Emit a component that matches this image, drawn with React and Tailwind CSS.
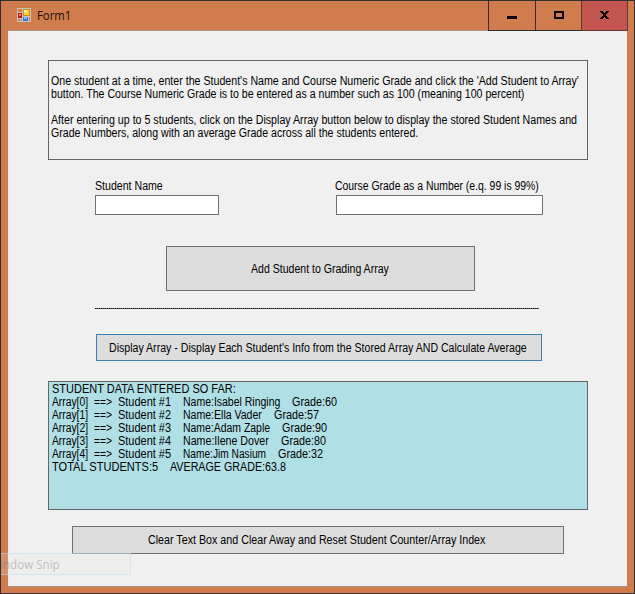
import { useLayoutEffect, useRef, useState } from "react";

// A single run of text, condensed horizontally to a set width.
function Run({ w, gap = 0, children }) {
  const ref = useRef(null);
  const [scale, setScale] = useState(1);
  useLayoutEffect(() => {
    setScale(w / ref.current.offsetWidth);
  }, [w, children]);
  return (
    <span className="block shrink-0 whitespace-pre" style={{ width: w, marginLeft: gap }}>
      <span ref={ref} className="inline-block origin-left align-top" style={{ transform: `scaleX(${scale})` }}>
        {children}
      </span>
    </span>
  );
}

const students = [
  { name: "Isabel Ringing", grade: 60, nameW: 97 },
  { name: "Ella Vader", grade: 57, nameW: 79 },
  { name: "Adam Zaple", grade: 90, nameW: 87 },
  { name: "Ilene Dover", grade: 80, nameW: 86 },
  { name: "Jim Nasium", grade: 32, nameW: 83 },
];

function FormIcon() {
  return (
    <svg className="ml-4 mt-[7px] shrink-0" width="14" height="14" viewBox="0 0 14 14" shapeRendering="crispEdges">
      <path d="M0 0H14V14H0Z" fill="#c9c3bd" />
      <path d="M1 1H5V4H1Z M1 11H3V13H1Z M4 11H5V13H4Z M12 9H13V13H12Z" fill="#d07c4d" />
      <rect x="1" y="5" width="4" height="5" fill="#b51b1b" />
      <rect x="2" y="6" width="2" height="2" fill="#ee7777" />
      <rect x="6" y="1" width="7" height="7" fill="#c9940f" />
      <rect x="7" y="2" width="5" height="5" fill="#f8cc3c" />
      <rect x="7" y="2" width="3" height="2" fill="#fff0a0" />
      <rect x="6" y="9" width="5" height="4" fill="#3478dc" />
      <rect x="7" y="9" width="3" height="2" fill="#80b4f5" />
    </svg>
  );
}

export default function App() {
  return (
    <div className="relative flex h-[594px] w-[635px] flex-col overflow-hidden border border-[#303035] bg-[#d07c4d] font-['Liberation_Sans',Arial,sans-serif] text-[12px] leading-[13px] text-black">
      <header className="flex h-[30px] shrink-0">
        <FormIcon />
        <div className="ml-[6px] mt-[6px] font-['Open_Sans',sans-serif] text-[12px] leading-[18px] text-[#200c08]">
          <Run w={34}>Form1</Run>
        </div>
        <div className="ml-auto mr-[6px] flex h-[30px]">
          <button className="flex w-[47px] items-start justify-center border-b border-l border-[#303035] pt-[15px]" aria-label="Minimize">
            <svg width="10" height="3" shapeRendering="crispEdges"><path d="M0 0H10V3H0Z" /></svg>
          </button>
          <button className="flex w-[46px] items-start justify-center border-b border-l border-[#303035] pt-[10px]" aria-label="Maximize">
            <svg width="10" height="8" shapeRendering="crispEdges"><path fillRule="evenodd" d="M0 0H10V8H0ZM2 2V6H8V2Z" /></svg>
          </button>
          <button className="flex w-[47px] items-start justify-center border-x border-b border-[#643535] bg-[#c2564f] pt-[10px]" aria-label="Close">
            <svg width="9" height="8" shapeRendering="crispEdges">
              <path d="M0 0H3V1H4V2H5V1H6V0H9V1H8V2H7V3H6V5H7V6H8V7H9V8H6V7H5V6H4V7H3V8H0V7H1V6H2V5H3V3H2V2H1V1H0Z" />
            </svg>
          </button>
        </div>
      </header>
      <main className="ml-[7px] -mt-px flex h-[557px] w-[619px] shrink-0 flex-col border-y border-[#a8918c] bg-[#f0f0f0] [clip-path:polygon(0_0,480px_0,480px_1px,620px_1px,620px_100%,0_100%)]">
        <section className="ml-10 mt-[29px] h-[100px] w-[540px] shrink-0 border border-[#646464] pl-[2px] pt-[14px]">
          <Run w={528}>One student at a time, enter the Student's Name and Course Numeric Grade and click the 'Add Student to Array'</Run>
          <Run w={473}>button. The Course Numeric Grade is to be entered as a number such as 100 (meaning 100 percent)</Run>
          <div className="h-[13px]" />
          <Run w={526}>After entering up to 5 students, click on the Display Array button below to display the stored Student Names and</Run>
          <Run w={367}>Grade Numbers, along with an average Grade across all the students entered.</Run>
        </section>
        <div className="ml-[87px] mt-5 flex shrink-0">
          <label className="w-[240px]">
            <Run w={68}>Student Name</Run>
            <input className="mt-[2px] block h-5 w-[124px] border border-[#707070] bg-white" />
          </label>
          <label>
            <Run w={204}>Course Grade as a Number (e.q. 99 is 99%)</Run>
            <input className="ml-px mt-[2px] block h-5 w-[207px] border border-[#707070] bg-white" />
          </label>
        </div>
        <button className="ml-[158px] mt-[31px] flex h-[45px] w-[309px] shrink-0 items-center border border-[#707070] bg-[#dddddd] pl-[84px] pt-[2px]">
          <Run w={138}>Add Student to Grading Array</Run>
        </button>
        <div className="ml-[87px] mt-[17px] h-px w-[444px] shrink-0 bg-[repeating-linear-gradient(90deg,#101018_0_1px,#2f5f8c_1px_2px,#101018_2px_3px,#7d5632_3px_4px)]" />
        <button className="ml-[88px] mt-[25px] flex h-[27px] w-[446px] shrink-0 items-center border border-[#3c7fb1] bg-[#dddddd] pl-3 pt-[2px]">
          <Run w={418}>Display Array - Display Each Student's Info from the Stored Array AND Calculate Average</Run>
        </button>
        <section className="ml-10 mt-5 h-[129px] w-[540px] shrink-0 border border-[#646464] bg-[#b0e0e6] pl-[3px] pt-px">
          <Run w={184}>STUDENT DATA ENTERED SO FAR:</Run>
          {students.map((s, i) => (
            <div key={s.name} className="flex">
              <Run w={36}>{`Array[${i}]`}</Run>
              <Run w={18} gap={6}>{"==>"}</Run>
              <Run w={53} gap={6}>{`Student #${i + 1}`}</Run>
              <Run w={s.nameW} gap={12}>{`Name:${s.name}`}</Run>
              <Run w={45} gap={12}>{`Grade:${s.grade}`}</Run>
            </div>
          ))}
          <div className="flex">
            <Run w={106}>TOTAL STUDENTS:5</Run>
            <Run w={116} gap={12}>AVERAGE GRADE:63.8</Run>
          </div>
        </section>
        <button className="ml-16 mt-4 flex h-7 w-[492px] shrink-0 items-center border border-[#707070] bg-[#dddddd] pl-[75px]">
          <Run w={337}>Clear Text Box and Clear Away and Reset Student Counter/Array Index</Run>
        </button>
      </main>
      <div className="absolute left-[-1px] top-[552px] flex h-[22px] w-[131px] items-center border border-l-0 border-[#b8dcec]/50 bg-[#e6e6e6]/20 font-['Open_Sans',sans-serif] text-[12px] text-[#756d6d]/40">
        <Run w={60}>indow Snip</Run>
      </div>
    </div>
  );
}
